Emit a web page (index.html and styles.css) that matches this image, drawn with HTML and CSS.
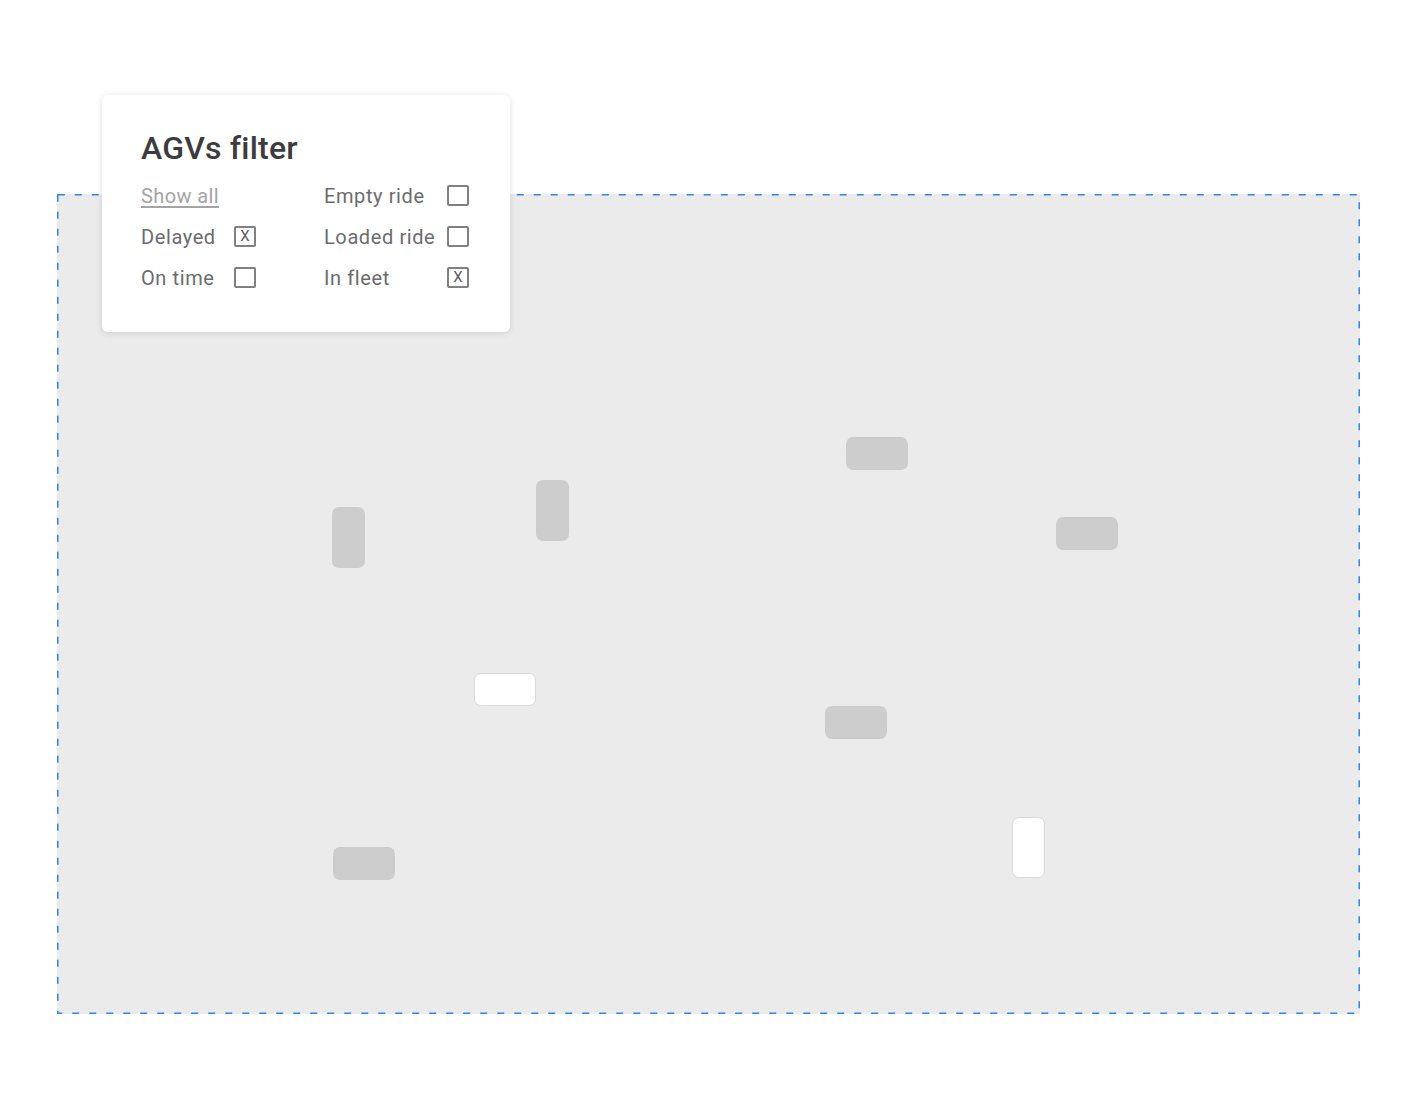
FILE: index.html
```html
<!DOCTYPE html>
<html>
<head>
<meta charset="utf-8">
<link rel="stylesheet" href="styles.css">
</head>
<body>
<div class="page">
  <div class="canvas">
    <svg class="frame" width="1303" height="820" viewBox="0 0 1303 820">
      <rect x="0.75" y="0.75" width="1301.5" height="818.5" fill="none" stroke="#3386ee" stroke-width="1.6" stroke-dasharray="7 10"/>
    </svg>
    <div class="agv gray h" style="left:789px; top:243px;"></div>
    <div class="agv gray v" style="left:479px; top:286px;"></div>
    <div class="agv gray v" style="left:275px; top:313px;"></div>
    <div class="agv gray h" style="left:999px; top:323px;"></div>
    <div class="agv white h" style="left:417px; top:479px;"></div>
    <div class="agv gray h" style="left:768px; top:512px;"></div>
    <div class="agv gray h" style="left:276px; top:653px;"></div>
    <div class="agv white v" style="left:955px; top:623px;"></div>
  </div>
  <div class="panel">
    <h1 class="title">AGVs filter</h1>
    <div class="grid">
      <div class="item left"><a class="show-all" href="#">Show all</a></div>
      <div class="item right"><span class="label">Empty ride</span><span class="box"></span></div>
      <div class="item left"><span class="label">Delayed</span><span class="box checked">X</span></div>
      <div class="item right"><span class="label">Loaded ride</span><span class="box"></span></div>
      <div class="item left"><span class="label">On time</span><span class="box"></span></div>
      <div class="item right"><span class="label">In fleet</span><span class="box checked">X</span></div>
    </div>
  </div>
</div>
</body>
</html>
```
FILE: styles.css
```css
html, body {
  margin: 0;
  padding: 0;
  background: #ffffff;
}
body {
  font-family: Roboto, "Liberation Sans", sans-serif;
  width: 1405px;
  height: 1098px;
  overflow: hidden;
}
.page {
  position: relative;
  width: 1405px;
  height: 1098px;
  box-sizing: border-box;
  padding: 194px 0 0 57px;
}
.canvas {
  position: relative;
  width: 1303px;
  height: 820px;
  background: #ebebec;
}
.frame {
  position: absolute;
  left: 0;
  top: 0;
}
.agv {
  position: absolute;
  box-sizing: border-box;
  border-radius: 7px;
}
.agv.h { width: 62px; height: 33px; }
.agv.v { width: 33px; height: 61px; }
.agv.gray { background: #cdcdce; }
.agv.white { background: #ffffff; border: 1px solid #d9d9da; }

.panel {
  position: absolute;
  left: 102px;
  top: 95px;
  width: 408px;
  height: 237px;
  box-sizing: border-box;
  background: #ffffff;
  border-radius: 6px;
  box-shadow: 0 1px 6px rgba(0, 0, 0, 0.12);
  padding: 29px 0 0 39px;
}
.title {
  margin: 0;
  font-size: 32px;
  font-weight: 500;
  color: #3c3c3e;
  line-height: 48px;
  letter-spacing: 0.2px;
}
.grid {
  display: grid;
  grid-template-columns: 183px 147px;
  grid-auto-rows: 41px;
  margin-top: 3px;
}
.item {
  display: flex;
  align-items: center;
  height: 41px;
  justify-content: space-between;
}
.item.left { width: 115px; }
.item.right { width: 145px; }
.label {
  font-size: 20px;
  letter-spacing: 0.6px;
  color: #6c6c6e;
}
.show-all {
  font-size: 20px;
  letter-spacing: 0.4px;
  color: #a4a4a6;
  text-decoration: underline;
  text-underline-offset: 3px;
}
.box {
  box-sizing: border-box;
  width: 22px;
  height: 21px;
  border: 2px solid #808082;
  border-radius: 2px;
  display: flex;
  align-items: center;
  justify-content: center;
  font-size: 15px;
  color: #5a5a5c;
  line-height: 1;
}
```
